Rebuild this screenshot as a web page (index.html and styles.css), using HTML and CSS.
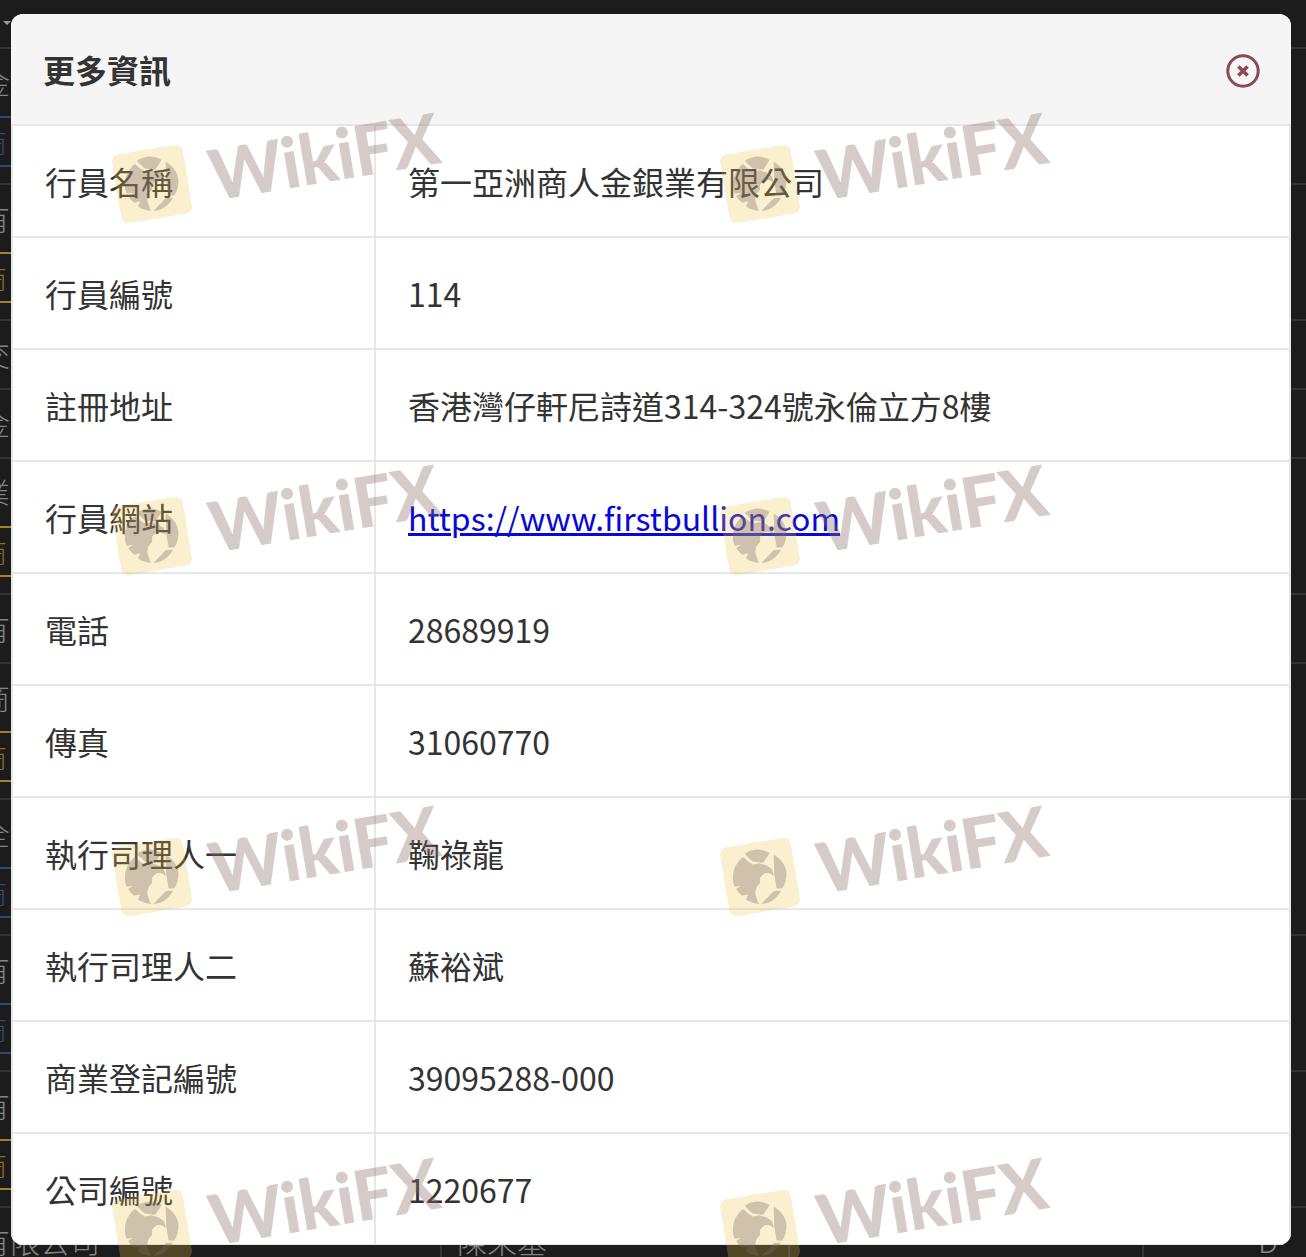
FILE: index.html
```html
<!DOCTYPE html>
<html lang="zh-Hant">
<head>
<meta charset="utf-8">
<title>更多資訊</title>
<link rel="stylesheet" href="styles.css">
</head>
<body>
<div class="page">
  <div class="top-row"><span class="caret"></span></div>
  <div class="bg-row tall"><div class="bg-name">金<span class="tag blue">商</span></div><div></div><div></div><div></div></div>
  <div class="bg-row tall"><div class="bg-name">有<span class="tag gold">商</span></div><div></div><div></div><div></div></div>
  <div class="bg-row"><div class="bg-name">交</div><div></div><div></div><div></div></div>
  <div class="bg-row"><div class="bg-name">金</div><div></div><div></div><div></div></div>
  <div class="bg-row tall"><div class="bg-name">業<span class="tag gold">商</span></div><div></div><div></div><div></div></div>
  <div class="bg-row"><div class="bg-name">有</div><div></div><div></div><div></div></div>
  <div class="bg-row tall"><div class="bg-name">商<span class="tag gold">商</span></div><div></div><div></div><div></div></div>
  <div class="bg-row tall"><div class="bg-name">全<span class="tag blue">商</span></div><div></div><div></div><div></div></div>
  <div class="bg-row tall"><div class="bg-name">有<span class="tag blue">商</span></div><div></div><div></div><div></div></div>
  <div class="bg-row tall"><div class="bg-name">有<span class="tag gold">商</span></div><div></div><div></div><div></div></div>
  <div class="bg-row last"><div class="bg-name">有限公司</div><div class="bg-cell">陳采基</div><div class="bg-cell"></div><div class="bg-cell bg-end">D</div></div>
</div>

<section class="modal">
  <header class="modal-head">
    <h2 class="modal-title">更多資訊</h2>
    <svg class="close" viewBox="0 0 36 36" aria-label="close">
      <circle cx="18" cy="18" r="15.2"></circle>
      <path d="M13.4 13.4 22.6 22.6M22.6 13.4 13.4 22.6"></path>
    </svg>
  </header>
  <table class="info">
    <tr><td>行員名稱</td><td>第一亞洲商人金銀業有限公司</td></tr>
    <tr><td>行員編號</td><td>114</td></tr>
    <tr><td>註冊地址</td><td>香港灣仔軒尼詩道314-324號永倫立方8樓</td></tr>
    <tr><td>行員網站</td><td><a class="site" href="#">https://www.firstbullion.com</a></td></tr>
    <tr><td>電話</td><td>28689919</td></tr>
    <tr><td>傳真</td><td>31060770</td></tr>
    <tr><td>執行司理人一</td><td>鞠祿龍</td></tr>
    <tr><td>執行司理人二</td><td>蘇裕斌</td></tr>
    <tr><td>商業登記編號</td><td>39095288-000</td></tr>
    <tr><td>公司編號</td><td>1220677</td></tr>
  </table>
</section>

<div class="wm wm-a1"><svg class="wm-logo" viewBox="0 0 72 70"><use href="#eagle"></use></svg><span class="wm-word">WikiFX</span></div>
<div class="wm wm-a2"><svg class="wm-logo" viewBox="0 0 72 70"><use href="#eagle"></use></svg><span class="wm-word">WikiFX</span></div>
<div class="wm wm-b1"><svg class="wm-logo" viewBox="0 0 72 70"><use href="#eagle"></use></svg><span class="wm-word">WikiFX</span></div>
<div class="wm wm-b2"><svg class="wm-logo" viewBox="0 0 72 70"><use href="#eagle"></use></svg><span class="wm-word">WikiFX</span></div>
<div class="wm wm-c1"><svg class="wm-logo" viewBox="0 0 72 70"><use href="#eagle"></use></svg><span class="wm-word">WikiFX</span></div>
<div class="wm wm-c2"><svg class="wm-logo" viewBox="0 0 72 70"><use href="#eagle"></use></svg><span class="wm-word">WikiFX</span></div>
<div class="wm wm-d1"><svg class="wm-logo" viewBox="0 0 72 70"><use href="#eagle"></use></svg><span class="wm-word">WikiFX</span></div>
<div class="wm wm-d2"><svg class="wm-logo" viewBox="0 0 72 70"><use href="#eagle"></use></svg><span class="wm-word">WikiFX</span></div>

<svg class="defs" width="0" height="0">
  <symbol id="eagle" viewBox="0 0 72 70">
    <rect class="tile" width="72" height="70" rx="8"></rect>
    <path class="mark" d="M8.7 36C8.8 26 14 17 22.5 12.5L27 18 31 21.5 38 21.5 44 24.5 49 29 50 36 45.5 32.5 41 32 36 35.5 35 41 31 44 28.5 50 29.5 58 30.5 61.5C26 60.5 22 58 18.5 55L21.5 50 15 50.5C13 48 11.5 45.5 10.5 43L16 40.5 9.5 40.5Z"></path>
    <path class="mark" d="M24.8 9.8C29 7.8 33.5 7 37.7 7.5 42 8.2 46 10 49.5 13L41.5 21.5 31.5 18.5Z"></path>
    <path class="mark" d="M53.2 15C59 20 63 27 62.8 34 62.5 40 60 46 56 50L50.5 49 50.5 34 52 24Z"></path>
    <path class="mark" d="M33 61.8 47.5 51 54.5 52C50.5 57 45.5 60.5 39.5 61.8 37 62.2 35 62.2 33 61.8Z"></path>
  </symbol>
</svg>
</body>
</html>
```
FILE: styles.css
```css
* {
  box-sizing: border-box;
}

html,
body {
  margin: 0;
  height: 1257px;
  overflow: hidden;
  background: #1c1c1c;
}

body {
  position: relative;
  font-family: "Noto Sans CJK TC", "Noto Sans", sans-serif;
  color: #333;
}

.page {
  width: 1326px;
  margin-left: -20px;
  color: #858585;
  font-size: 30px;
  font-weight: 300;
}

.top-row {
  height: 47px;
  position: relative;
}

.caret {
  position: absolute;
  left: 23px;
  top: 21px;
  border: 4px solid transparent;
  border-top-color: #999;
  border-bottom: 0;
}

.bg-row {
  display: grid;
  grid-template-columns: 460px 348px 354px 164px;
  height: 69px;
  border-top: 2px solid #333;
}

.tall {
  height: 136px;
}

.bg-name {
  line-height: 64px;
}

.tag {
  display: block;
  height: 51px;
  margin-top: 3px;
  border-width: 2px 0;
  border-style: solid;
  font-size: 27px;
  line-height: 47px;
}

.gold {
  color: #8f6f28;
  border-color: #a5812c;
}

.blue {
  color: #34506f;
  border-color: #2f4a6b;
}

.bg-row > div + div {
  border-left: 2px solid #333;
}

.bg-cell {
  padding-left: 15px;
  line-height: 64px;
}

.bg-end {
  padding-left: 114px;
}

.modal {
  position: absolute;
  left: 11px;
  top: 14px;
  width: 1280px;
  height: 1231px;
  overflow: hidden;
  border-radius: 12px;
  background: #fff;
}

.modal-head {
  display: flex;
  align-items: center;
  justify-content: space-between;
  height: 110px;
  padding: 0 30px 0 32px;
  background: #f6f5f5;
}

.modal-title {
  margin: 0;
  font-size: 32px;
  font-weight: 700;
  line-height: 1.4;
  color: #333;
}

.close {
  width: 36px;
  height: 36px;
  margin-top: 4px;
  fill: none;
  stroke: #8a4a50;
  stroke-width: 3;
}

.close path {
  stroke-width: 3.6;
}

.info {
  width: 100%;
  table-layout: fixed;
  border-collapse: separate;
  border-spacing: 0;
  border: 2px solid #e5e7eb;
  font-size: 32px;
}

.info td {
  height: 112px;
  padding: 0 32px;
  border-bottom: 2px solid #e5e7eb;
}

.info td:first-child {
  width: 363px;
  border-right: 2px solid #e5e7eb;
}

.site {
  color: #0808d8;
}

.wm {
  position: absolute;
  display: flex;
  align-items: center;
  width: 340px;
  height: 72px;
  transform: rotate(-9.5deg);
  transform-origin: 36px 36px;
  pointer-events: none;
}

.wm-a1 { left: 116px; top: 148px; }
.wm-a2 { left: 724px; top: 148px; }
.wm-b1 { left: 116px; top: 500px; }
.wm-b2 { left: 724px; top: 500px; }
.wm-c1 { left: 116px; top: 841px; }
.wm-c2 { left: 724px; top: 841px; }
.wm-d1 { left: 116px; top: 1193px; }
.wm-d2 { left: 724px; top: 1193px; }

.wm-logo {
  flex: none;
  width: 72px;
  height: 70px;
}

.wm-word {
  margin-left: 22px;
  font-family: Lato, "Noto Sans", sans-serif;
  font-size: 70px;
  font-weight: 900;
  line-height: 72px;
  letter-spacing: -0.5px;
  color: rgba(108, 84, 92, 0.27);
  text-shadow: 0 0 2px rgba(240, 205, 140, 0.12);
}

.defs {
  position: absolute;
}

.tile {
  fill: rgba(235, 190, 60, 0.25);
}

.mark {
  fill: #7a6a6c;
  fill-opacity: 0.34;
}
```
